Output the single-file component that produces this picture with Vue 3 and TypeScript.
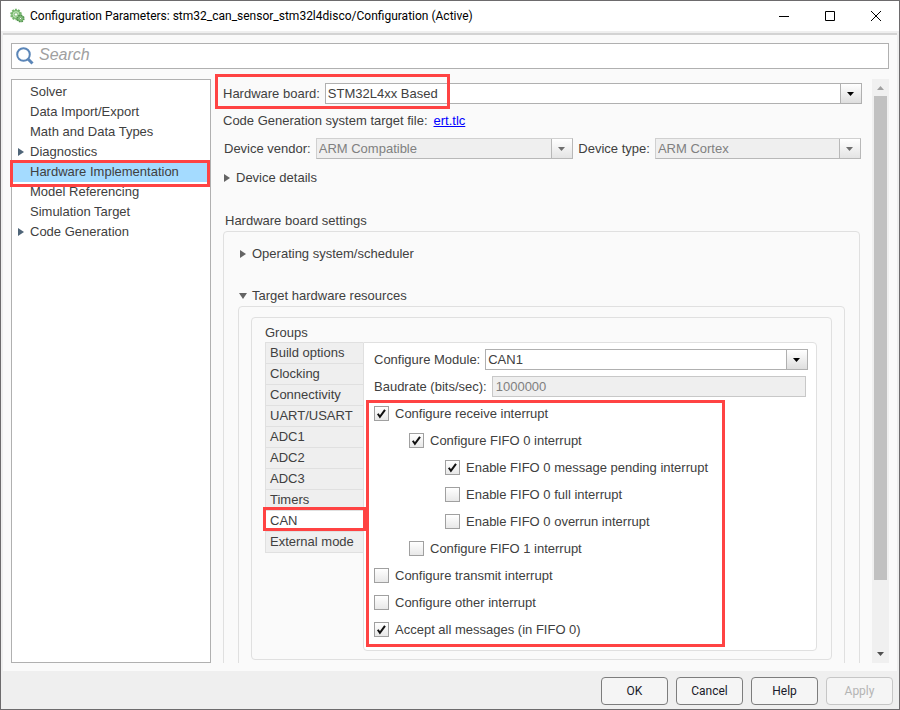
<script setup lang="ts">
import { ref } from 'vue'

interface NavItem {
  label: string
  expandable?: boolean
}

interface Option {
  label: string
  level: number
  checked: boolean
}

const navItems: NavItem[] = [
  { label: 'Solver' },
  { label: 'Data Import/Export' },
  { label: 'Math and Data Types' },
  { label: 'Diagnostics', expandable: true },
  { label: 'Hardware Implementation' },
  { label: 'Model Referencing' },
  { label: 'Simulation Target' },
  { label: 'Code Generation', expandable: true },
]
const activeNav = ref('Hardware Implementation')

const groups: string[] = [
  'Build options',
  'Clocking',
  'Connectivity',
  'UART/USART',
  'ADC1',
  'ADC2',
  'ADC3',
  'Timers',
  'CAN',
  'External mode',
]
const activeGroup = ref('CAN')

const options = ref<Option[]>([
  { label: 'Configure receive interrupt', level: 0, checked: true },
  { label: 'Configure FIFO 0 interrupt', level: 1, checked: true },
  { label: 'Enable FIFO 0 message pending interrupt', level: 2, checked: true },
  { label: 'Enable FIFO 0 full interrupt', level: 2, checked: false },
  { label: 'Enable FIFO 0 overrun interrupt', level: 2, checked: false },
  { label: 'Configure FIFO 1 interrupt', level: 1, checked: false },
  { label: 'Configure transmit interrupt', level: 0, checked: false },
  { label: 'Configure other interrupt', level: 0, checked: false },
  { label: 'Accept all messages (in FIFO 0)', level: 0, checked: true },
])

const search = ref('')
const baudrate = ref('1000000')
</script>

<template>
  <div class="window">
    <header class="titlebar">
      <svg class="app-icon" viewBox="0 0 16 16" aria-hidden="true">
        <circle cx="7" cy="6.500" r="4.800" fill="#a9d79f" stroke="#74b56c" stroke-width="2" stroke-dasharray="1.9 1.1" />
        <circle cx="7" cy="6.500" r="4" fill="#b9e0b0" stroke="#6fb067" />
        <circle cx="7" cy="6.500" r="1.700" fill="#fff" stroke="#6fb067" stroke-width=".8" />
        <circle cx="11.500" cy="10.500" r="3.200" fill="#8fca86" stroke="#4f8f4b" stroke-width="1.800" stroke-dasharray="1.5 1" />
        <circle cx="11.500" cy="10.500" r="2.600" fill="#a5d69b" stroke="#579b52" stroke-width=".8" />
        <circle cx="11.500" cy="10.500" r="1.100" fill="#fff" stroke="#4f8f4b" stroke-width=".8" />
      </svg>
      <h1 class="title">Configuration Parameters: stm32_can_sensor_stm32l4disco/Configuration (Active)</h1>
      <button class="caption" type="button" aria-label="Minimize">
        <svg viewBox="0 0 12 12"><path d="M1 6.500H11" /></svg>
      </button>
      <button class="caption" type="button" aria-label="Maximize">
        <svg viewBox="0 0 12 12"><path d="M1.500 1.500H10.500V10.500H1.500Z" /></svg>
      </button>
      <button class="caption" type="button" aria-label="Close">
        <svg viewBox="0 0 12 12"><path d="M1 1L11 11M11 1L1 11" /></svg>
      </button>
    </header>

    <div class="body">
      <div class="search">
        <svg viewBox="0 0 18 18" aria-hidden="true">
          <circle cx="7.500" cy="7.500" r="6.300" fill="none" stroke="#5b86b8" stroke-width="2" />
          <path d="M12 12L16.500 16.500" stroke="#5b86b8" stroke-width="3" />
        </svg>
        <input v-model="search" type="text" placeholder="Search" aria-label="Search" />
      </div>

      <div class="columns">
        <nav class="tree" aria-label="Categories">
          <button
            v-for="item in navItems"
            :key="item.label"
            type="button"
            class="tree-item"
            :class="{ active: item.label === activeNav }"
            @click="activeNav = item.label"
          >
            <span class="twisty"><svg v-if="item.expandable" viewBox="0 0 6 8"><path d="M0 0L6 4L0 8Z" /></svg></span>
            {{ item.label }}
          </button>
        </nav>

        <main class="content">
          <div class="row board">
            <label for="board">Hardware board:</label>
            <span class="select">
              <select id="board"><option>STM32L4xx Based</option></select>
              <svg viewBox="0 0 7 4"><path d="M0 0H7L3.500 4Z" /></svg>
            </span>
          </div>
          <div class="row target">
            <span>Code Generation system target file:</span>
            <a href="#ert">ert.tlc</a>
          </div>
          <div class="row device">
            <label for="vendor">Device vendor:</label>
            <span class="select vendor disabled">
              <select id="vendor" disabled><option>ARM Compatible</option></select>
              <svg viewBox="0 0 7 4"><path d="M0 0H7L3.500 4Z" /></svg>
            </span>
            <label for="type">Device type:</label>
            <span class="select type disabled">
              <select id="type" disabled><option>ARM Cortex</option></select>
              <svg viewBox="0 0 7 4"><path d="M0 0H7L3.500 4Z" /></svg>
            </span>
          </div>
          <button class="disclosure details" type="button" aria-expanded="false">
            <svg viewBox="0 0 8 8"><path d="M1 0L7 4L1 8Z" /></svg>Device details
          </button>

          <h2 class="heading">Hardware board settings</h2>
          <section class="box settings">
            <button class="disclosure" type="button" aria-expanded="false">
              <svg viewBox="0 0 8 8"><path d="M1 0L7 4L1 8Z" /></svg>Operating system/scheduler
            </button>
            <button class="disclosure" type="button" aria-expanded="true">
              <svg viewBox="0 0 8 8"><path d="M0 1H8L4 7Z" /></svg>Target hardware resources
            </button>
            <div class="box resources">
              <div class="box groups">
                <h3 class="groups-title">Groups</h3>
                <div class="tabs">
                  <div class="tab-list" role="tablist">
                    <button
                      v-for="group in groups"
                      :key="group"
                      type="button"
                      role="tab"
                      class="tab"
                      :class="{ active: group === activeGroup }"
                      :aria-selected="group === activeGroup"
                      @click="activeGroup = group"
                    >
                      {{ group }}
                    </button>
                  </div>
                  <div class="panel" role="tabpanel">
                    <div class="row">
                      <label for="module">Configure Module:</label>
                      <span class="select">
                        <select id="module"><option>CAN1</option></select>
                        <svg viewBox="0 0 7 4"><path d="M0 0H7L3.500 4Z" /></svg>
                      </span>
                    </div>
                    <div class="row baud">
                      <label for="baud">Baudrate (bits/sec):</label>
                      <input id="baud" v-model="baudrate" type="text" disabled />
                    </div>
                    <div class="options">
                      <label v-for="option in options" :key="option.label" class="option" :class="'level-' + option.level">
                        <input v-model="option.checked" type="checkbox" />
                        <svg v-if="option.checked" class="tick" viewBox="0 0 15 15"><path d="M3.800 7.800L5.900 10.800L11 3.800" /></svg>
                        {{ option.label }}
                      </label>
                    </div>
                  </div>
                </div>
              </div>
            </div>
          </section>
        </main>

        <div class="scrollbar" aria-hidden="true">
          <svg class="up" viewBox="0 0 7 4"><path d="M3.500 0L7 4H0Z" /></svg>
          <div class="track"><div class="thumb"></div></div>
          <svg viewBox="0 0 7 4"><path d="M0 0H7L3.500 4Z" /></svg>
        </div>
      </div>
    </div>

    <footer class="footer">
      <button type="button">OK</button>
      <button type="button">Cancel</button>
      <button type="button">Help</button>
      <button type="button" disabled>Apply</button>
    </footer>
  </div>
</template>

<style>
body {
  margin: 0;
}
</style>

<style scoped>
.window,
.window *,
.window *::after {
  box-sizing: border-box;
}

.window {
  display: flex;
  flex-direction: column;
  height: 100vh;
  border: 1px solid #6d6b6d;
  background: #efefef;
  color: #404040;
  font-family: "Liberation Sans", Arial, sans-serif;
  font-size: 13px;
  line-height: 18px;
}

button,
input,
select {
  margin: 0;
  padding: 0;
  border: 0;
  background: none;
  color: inherit;
  font: inherit;
}

/* Title bar */
.titlebar {
  display: flex;
  align-items: center;
  height: 30px;
  padding-left: 8px;
  background: #fff;
  color: #000;
}

.app-icon {
  width: 16px;
  height: 16px;
  flex: none;
}

.title {
  flex: 1;
  margin: 0 0 0 5px;
  font: 400 12px/18px "Segoe UI", Roboto, sans-serif;
  white-space: nowrap;
}

.caption {
  display: flex;
  align-items: center;
  justify-content: center;
  width: 46px;
  height: 30px;
}

.caption svg {
  width: 12px;
  height: 12px;
  fill: none;
  stroke: #000;
}

/* Body */
.body {
  display: flex;
  flex: 1;
  flex-direction: column;
  gap: 10px;
  min-height: 0;
  margin: 2px 2px 0;
  padding: 8px;
  border-top: 2px solid #d3d3d3;
  background: #fafafa;
}

.search {
  display: flex;
  align-items: center;
  gap: 5px;
  height: 26px;
  padding: 0 4px;
  border: 1px solid #b0b0b0;
  background: #fff;
}

.search svg {
  width: 18px;
  height: 18px;
}

.search input {
  flex: 1;
  height: 24px;
  padding-bottom: 2px;
  font-size: 16px;
  font-style: italic;
  outline: none;
}

.search input::placeholder {
  color: #a0a0a0;
}

.columns {
  display: flex;
  flex: 1;
  min-height: 0;
}

/* Category tree */
.tree {
  display: flex;
  flex: none;
  flex-direction: column;
  width: 200px;
  padding: 2px 0;
  border: 1px solid #b0b0b0;
  background: #fff;
}

.tree-item {
  position: relative;
  display: flex;
  align-items: center;
  height: 20px;
  text-align: left;
}

.tree-item.active {
  background: #a4dbff;
}

.tree-item.active::after {
  content: "";
  position: absolute;
  z-index: 1;
  inset: -2px 0 -5px -2px;
  border: 3px solid #ff4343;
}

.twisty {
  display: flex;
  width: 18px;
  padding-left: 6px;
}

.twisty svg {
  width: 6px;
  height: 8px;
  fill: #4f6578;
}

.content {
  flex: 1;
  min-width: 0;
  margin-top: -6px;
  padding: 10px 10px 0 12px;
  overflow: hidden;
}

.row {
  display: flex;
  align-items: center;
  gap: 5px;
  white-space: nowrap;
}

.select {
  position: relative;
  display: flex;
  flex: 1;
  height: 21px;
}

.select select {
  width: 100%;
  padding: 0 24px 0 2px;
  appearance: none;
  border: 1px solid #b0b0b0;
  border-radius: 0;
  background:
    linear-gradient(#b0b0b0, #b0b0b0) right 20px top 0 / 1px 100% no-repeat,
    linear-gradient(#fff, #dedede) right / 20px 100% no-repeat,
    #fff;
}

.select svg {
  position: absolute;
  top: 9px;
  right: 8px;
  width: 7px;
  height: 4px;
  fill: #000;
  pointer-events: none;
}

.select.disabled select {
  border-color: #d0d0d0 #b8b8b8 #b8b8b8 #d0d0d0;
  background:
    linear-gradient(#b8b8b8, #b8b8b8) right 20px top 0 / 1px 100% no-repeat,
    linear-gradient(#fff, #e4e4e4) right / 20px 100% no-repeat,
    #efefef;
  color: #808080;
  opacity: 1;
}

.select.disabled svg {
  fill: #6e6e6e;
}

.board {
  position: relative;
}

.board::after {
  content: "";
  position: absolute;
  top: -9px;
  left: -8px;
  width: 235px;
  height: 35px;
  border: 3px solid #ff4343;
  pointer-events: none;
}

.target {
  gap: 6px;
  height: 34px;
}

.target a {
  color: #00f;
}

.device {
  padding: 0 1px;
}

.vendor {
  flex: 5 1 0;
}

.type {
  flex: 4 1 0;
}

.disclosure {
  display: flex;
  align-items: center;
  gap: 5px;
  height: 18px;
}

.disclosure svg {
  width: 8px;
  height: 8px;
  fill: #646464;
}

.details {
  height: 38px;
}

.heading {
  margin: 14px 0 0 2px;
  font-size: 13px;
  font-weight: 400;
  line-height: 20px;
}

.box {
  border: 1px solid #e0e0e0;
  border-radius: 4px;
}

.settings {
  margin-right: 2px;
  padding: 13px 14px;
}

.settings > .disclosure {
  padding-left: 1px;
}

.settings > .disclosure + .disclosure {
  margin-top: 24px;
}

.resources {
  margin-top: 1px;
  padding: 10px 12px;
}

.groups {
  padding: 6px 14px 8px 13px;
}

.groups-title {
  margin: 0;
  font-size: 13px;
  font-weight: 400;
  line-height: 18px;
}

.tabs {
  display: flex;
}

.tab-list {
  flex: none;
  width: 98px;
}

.tab {
  position: relative;
  display: block;
  width: 98px;
  height: 21px;
  padding-left: 4px;
  border: solid #e0e0e0;
  border-width: 1px 0 0 1px;
  background: #efefef;
  text-align: left;
}

.tab:last-child {
  height: 22px;
  border-bottom-width: 1px;
}

.tab.active {
  width: 99px;
  background: #fff;
}

.tab.active::after {
  content: "";
  position: absolute;
  z-index: 1;
  inset: -4px -2px 0 -3px;
  border: 3px solid #ff4343;
}

.panel {
  flex: 1;
  min-width: 0;
  padding: 6px 8px 7px 10px;
  border: 1px solid #e0e0e0;
  border-radius: 0 4px 4px 4px;
  background: #fff;
}

.baud {
  margin: 6px 2px 3px 0;
}

.baud input {
  flex: 1;
  min-width: 0;
  height: 21px;
  padding: 0 3px;
  border: 1px solid #c8c8c8;
  background: #efefef;
  color: #808080;
}

.options {
  position: relative;
}

.options::after {
  content: "";
  position: absolute;
  top: 0;
  bottom: -4px;
  left: -8px;
  width: 359px;
  border: 3px solid #ff4343;
  pointer-events: none;
}

.option {
  position: relative;
  display: flex;
  align-items: center;
  gap: 6px;
  width: fit-content;
  height: 27px;
}

.level-1 {
  margin-left: 35px;
}

.level-2 {
  margin-left: 71px;
}

.option input {
  width: 15px;
  height: 15px;
  appearance: none;
  border: 1px solid #a0a0a0;
  background: linear-gradient(#fff, #e8e8e8);
}

.tick {
  position: absolute;
  left: 0;
  width: 15px;
  height: 15px;
  fill: none;
  stroke: #111;
  stroke-width: 2;
  pointer-events: none;
}

/* Scroll bar */
.scrollbar {
  display: flex;
  flex: none;
  flex-direction: column;
  align-items: center;
  width: 17px;
  padding: 7px 0;
  background: #f0f0f0;
}

.scrollbar svg {
  width: 7px;
  height: 4px;
  fill: #505050;
}

.scrollbar .up {
  fill: #a0a0a0;
}

.track {
  flex: 1;
  width: 13px;
  margin: 6px 0;
}

.thumb {
  height: 88%;
  background: #c1c1c1;
}

/* Footer */
.footer {
  display: flex;
  justify-content: flex-end;
  gap: 8px;
  padding: 6px 6px 4px;
}

.footer button {
  width: 67px;
  height: 28px;
  border: 1px solid #7d7d7d;
  border-radius: 4px;
  background: #f5f5f5;
  color: #1a1a2a;
  font: 12px/18px Roboto, sans-serif;
}

.footer button:disabled {
  border-color: #c6c6c6;
  color: #b4b4b4;
}
</style>
